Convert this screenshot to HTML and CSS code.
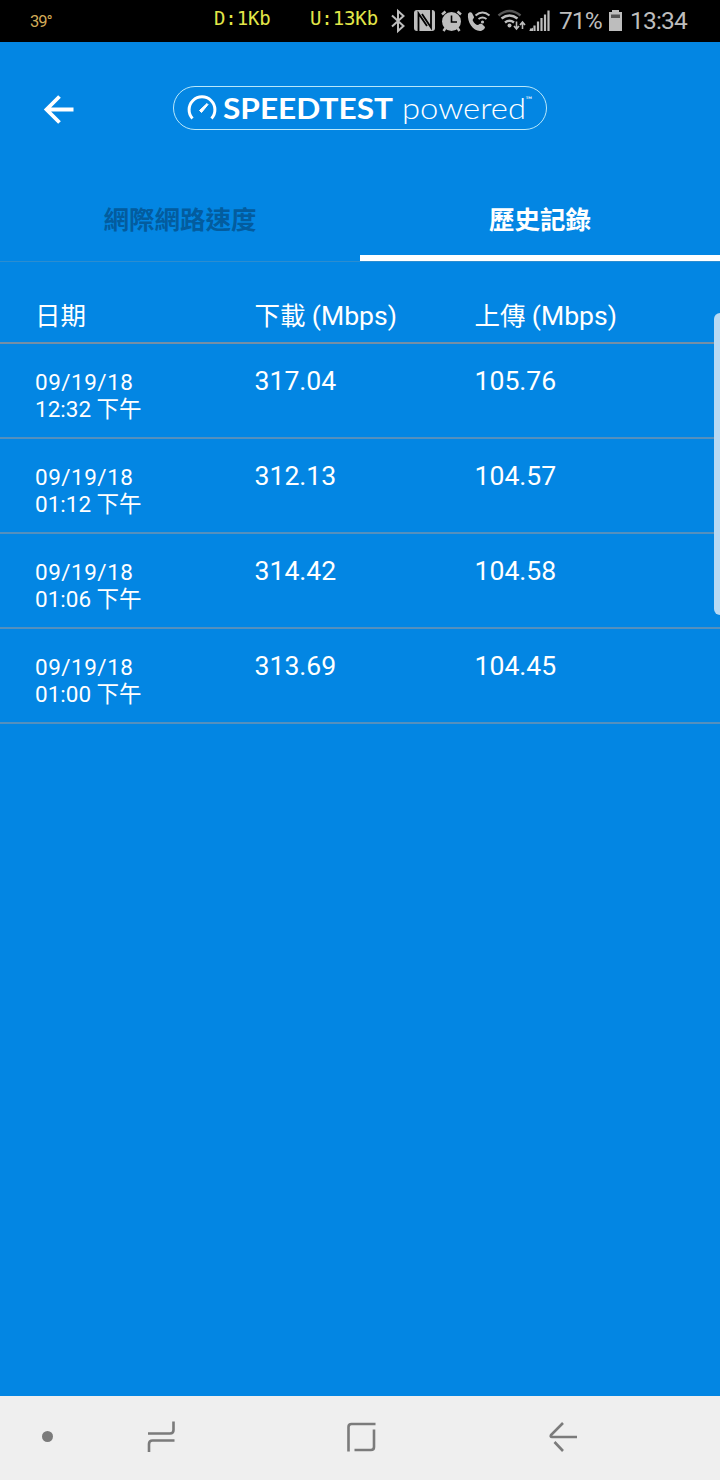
FILE: index.html
```html
<!DOCTYPE html>
<html lang="zh-Hant">
<head>
    <meta charset="UTF-8">
    <meta name="viewport" content="width=device-width, initial-scale=1.0">
    <title>Speedtest</title>
    <link rel="stylesheet" href="styles.css">
</head>
<body>
    <div class="status-bar">
        <span class="temp">39°</span>
        <span class="net down">D:1Kb</span>
        <span class="net up">U:13Kb</span>
        <svg class="status-icons" viewBox="0 0 162 42" width="162" height="42">
            <!-- bluetooth -->
            <path class="line" d="M2 15.500L13.500 26L8 31V11L13.500 16L2 26.500"/>
            <!-- nfc -->
            <rect class="solid" x="24" y="10" width="21" height="21" rx="3"/>
            <path class="cut nfc" d="M28.500 31V13.500L37 26M41 10V27.500L32 14"/>
            <!-- alarm -->
            <circle class="solid" cx="61.500" cy="21.500" r="9.500"/>
            <path class="line thick" d="M52 14.500L55.500 11.500M71 14.500L67.500 11.500M55.500 28L53.500 31M67.500 28L69.500 31"/>
            <path class="cut thin" d="M61.500 15.500V22H67"/>
            <!-- wifi calling -->
            <path class="solid" d="M78 14C79 12 81 12 82 13L84 17C84 19 82 19 83 21C84 23 86 25 88 25C90 24 91 23 93 25L95 27C95 29 92 31 90 31C83 31 77 22 78 14Z"/>
            <path class="line call" d="M85.500 15.500Q92.500 9.500 99.500 15.500M88.500 19Q92.500 16 96.500 19"/>
            <circle class="solid" cx="92.500" cy="22" r="1.600"/>
            <!-- wifi -->
            <path class="line dim" d="M108.500 15.500Q119.500 6.500 130.500 15.500"/>
            <path class="line thick" d="M111.500 18.500Q119.500 12.500 127.500 18.500M115 22.500Q119.500 19 124 22.500"/>
            <circle class="solid" cx="119.500" cy="25.500" r="2"/>
            <path class="line thin" d="M126.500 21.500V28.500M124 26L126.500 29L129 26M132.500 29V22.500M130 25L132.500 22L135 25"/>
            <!-- signal -->
            <path class="line bars" d="M141 31V28.500M144.500 31V25.500M148 31V21.500M151.500 31V18M155 31V14.500M158.500 31V10.500"/>
            <path class="solid" d="M139 31L143 27.500V31Z"/>
        </svg>
        <span class="percent">71%</span>
        <svg class="battery" viewBox="0 0 15 22" width="15" height="22">
            <path class="solid" d="M4 1H11V3H14V22H1V3H4Z"/>
            <path class="charge" d="M3 5.500H12V9H3Z"/>
        </svg>
        <span class="clock">13:34</span>
    </div>

    <div class="header">
        <svg class="back" viewBox="0 0 32 32" width="32" height="32">
            <path d="M30.500 15.500H4M16.500 2.500L3.500 15.500L16.500 28.500"/>
        </svg>
        <div class="logo">
            <svg class="gauge" viewBox="0 0 30 26" width="30" height="26">
                <path class="dial" d="M5.500 23.500A12.900 12.900 0 1 1 24.500 23.500"/>
                <path class="needle" d="M12.500 15.500L20 8.500L21 9.500L14.500 17.500Z"/>
            </svg>
            <svg class="wordmark" viewBox="0 0 316 42" width="316" height="42">
                <text class="brand" x="0" y="31.500" textLength="170" lengthAdjust="spacingAndGlyphs">SPEEDTEST</text>
                <text class="powered" x="179" y="31.500" textLength="124" lengthAdjust="spacingAndGlyphs">powered</text>
                <text class="tm" x="302.500" y="16">™</text>
            </svg>
        </div>
    </div>

    <div class="tabs">
        <div class="tab">網際網路速度</div>
        <div class="tab active">歷史記錄</div>
    </div>

    <div class="history">
        <div class="row head">
            <div>日期</div>
            <div>下載 <span class="unit">(Mbps)</span></div>
            <div>上傳 <span class="unit">(Mbps)</span></div>
        </div>
        <div class="row">
            <div class="date"><span class="day">09/19/18</span><br>12:32 下午</div>
            <div>317.04</div>
            <div>105.76</div>
        </div>
        <div class="row">
            <div class="date"><span class="day">09/19/18</span><br>01:12 下午</div>
            <div>312.13</div>
            <div>104.57</div>
        </div>
        <div class="row">
            <div class="date"><span class="day">09/19/18</span><br>01:06 下午</div>
            <div>314.42</div>
            <div>104.58</div>
        </div>
        <div class="row">
            <div class="date"><span class="day">09/19/18</span><br>01:00 下午</div>
            <div>313.69</div>
            <div>104.45</div>
        </div>
    </div>
    <div class="edge-handle"></div>

    <div class="nav-bar">
        <span class="dot"></span>
        <svg class="recents" viewBox="0 0 30 32" width="30" height="32">
            <path d="M2 12.500H24Q27.500 12.500 27.500 9V0.500M28.500 19.500H6.500Q3 19.500 3 23V31"/>
        </svg>
        <svg class="home" viewBox="0 0 30 32" width="30" height="32">
            <path d="M2.500 30.500V6Q2.500 3 5.500 3H29.500M28 8.500V26Q28 29 25 29H8.500"/>
        </svg>
        <svg class="nav-back" viewBox="0 0 30 32" width="30" height="32">
            <path d="M15 2L3 14Q2 16 4 16H29M6.500 21L15 30"/>
        </svg>
    </div>
</body>
</html>
```
FILE: styles.css
```css
* {
    margin: 0;
    padding: 0;
    box-sizing: border-box;
}
body {
    position: relative;
    display: flex;
    flex-direction: column;
    width: 720px;
    height: 1480px;
    font-family: Roboto, "Noto Sans CJK TC", sans-serif;
    color: #fff;
    background-color: #0386e3;
    overflow: hidden;
}
svg {
    display: block;
    flex: none;
}

/* status bar */
.status-bar {
    display: flex;
    align-items: center;
    height: 42px;
    padding-left: 30px;
    background-color: #000;
    color: #bdbdbd;
    white-space: nowrap;
}
.temp {
    width: 184px;
    font-size: 16.5px;
    letter-spacing: -1px;
    color: #d2ab58;
}
.net {
    height: 28px;
    font: 19px/28px "DejaVu Sans Mono", monospace;
    letter-spacing: -0.1px;
    color: #e2e648;
    margin-bottom: 6px;
}
.down {
    width: 96px;
}
.up {
    width: 80px;
}
.status-icons .line {
    fill: none;
    stroke: #bdbdbd;
    stroke-width: 2;
}
.status-icons .thick {
    stroke-width: 2.5;
}
.status-icons .thin {
    stroke-width: 1.6;
}
.status-icons .bars {
    stroke-width: 2.2;
}
.status-icons .dim {
    stroke: #555;
    stroke-width: 2.5;
}
.solid {
    fill: #bdbdbd;
}
.cut {
    fill: none;
    stroke: #000;
    stroke-width: 2.5;
}
.nfc {
    stroke-width: 1.8;
}
.percent {
    width: 49px;
    margin-left: 7px;
    font-size: 24.5px;
    letter-spacing: -0.9px;
}
.battery {
    margin-right: 7px;
    margin-bottom: 2px;
}
.clock {
    font-size: 24.5px;
    letter-spacing: -0.8px;
}
.percent,
.clock {
    padding-bottom: 1px;
}
.charge {
    fill: #555;
}

/* header */
.header {
    display: flex;
    align-items: center;
    height: 136px;
    padding-left: 43px;
}
.back {
    fill: none;
    stroke: #fff;
    stroke-width: 3.8;
}
.logo {
    display: flex;
    align-items: center;
    width: 374px;
    height: 44px;
    margin-left: 98px;
    padding-left: 13px;
    margin-bottom: 4px;
    border: 1.5px solid #b9e8fb;
    border-radius: 22px;
}
.gauge {
    margin-right: 6px;
}
.dial {
    fill: none;
    stroke: #fff;
    stroke-width: 3;
}
.needle {
    fill: #fff;
    stroke: #fff;
}
.wordmark text {
    fill: #fff;
    font-family: Lato, sans-serif;
}
.wordmark .brand {
    font-size: 29px;
    font-weight: 700;
}
.wordmark .powered {
    font-size: 29px;
    font-weight: 300;
}
.wordmark .tm {
    font-size: 9px;
}

/* tabs */
.tabs {
    display: flex;
    height: 84px;
    border-bottom: 1px solid #2c8dd0;
}
.tab {
    flex: 1;
    font-size: 25.5px;
    font-weight: 700;
    line-height: 84px;
    text-align: center;
    color: #035c9e;
}
.tab.active {
    color: #fff;
    border-bottom: 6px solid #fff;
}

/* results table */
.history {
    flex: 1;
}
.row {
    display: grid;
    grid-template-columns: 219.5px 220px 1fr;
    height: 95px;
    padding: 19px 0 0 35px;
    font-size: 26.6px;
    line-height: 36px;
    border-bottom: 2px solid #5590bd;
}
.row.head {
    height: 82px;
    padding-top: 36px;
    font-size: 25.5px;
    border-bottom-color: #758fa5;
}
.unit {
    font-size: 26.6px;
}
.date {
    padding-top: 6px;
    font-size: 22.5px;
    line-height: 27px;
}
.day {
    letter-spacing: 0.5px;
}
.edge-handle {
    position: absolute;
    top: 313px;
    right: 0;
    width: 6px;
    height: 302px;
    background-color: #b8daf4;
    border-radius: 6px 0 0 6px;
}

/* navigation bar */
.nav-bar {
    display: flex;
    align-items: center;
    height: 84px;
    padding: 0 0 3px 42px;
    background-color: #efefef;
}
.nav-bar svg {
    fill: none;
    stroke: #7b7b7b;
    stroke-width: 2.6;
}
.dot {
    width: 11px;
    height: 11px;
    border-radius: 50%;
    background-color: #7b7b7b;
}
.recents {
    margin-left: 93px;
}
.home {
    margin-left: 170px;
}
.nav-back {
    margin-left: 172px;
}
```
